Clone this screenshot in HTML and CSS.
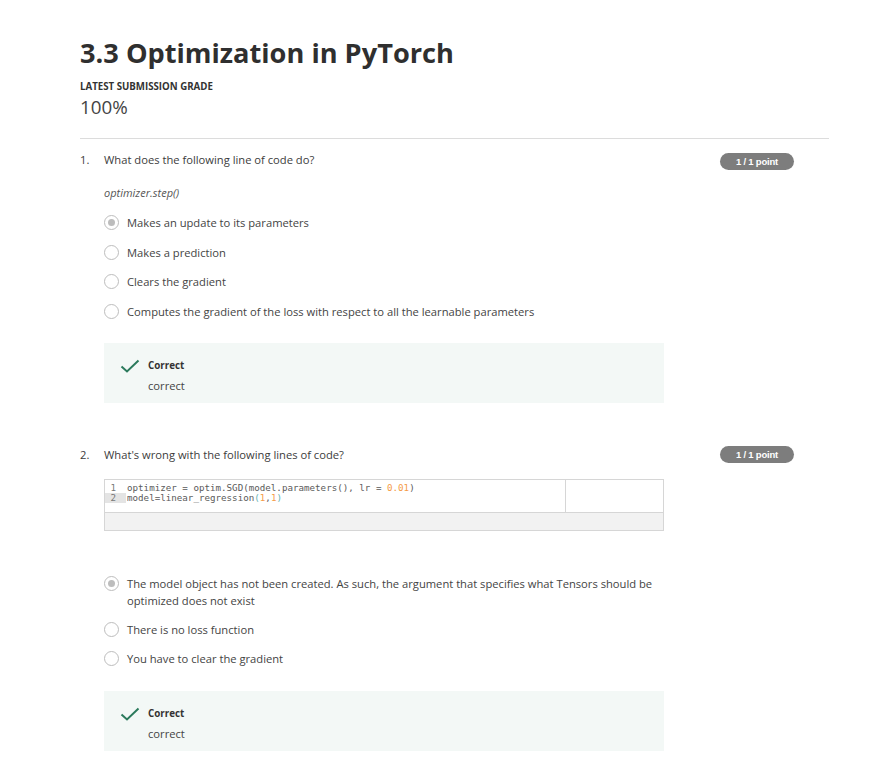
FILE: index.html
```html
<!DOCTYPE html>
<html>
<head>
<meta charset="utf-8">
<link rel="stylesheet" href="styles.css">
</head>
<body>
<div class="page">
  <h1 class="title">3.3 Optimization in PyTorch</h1>
  <div class="grade-label">LATEST SUBMISSION GRADE</div>
  <div class="grade">100%</div>
  <div class="divider"></div>

  <div class="question">
    <div class="qnum">1.</div>
    <div class="qbody">
      <div class="qtext">What does the following line of code do?</div>
      <div class="qcode-italic">optimizer.step()</div>
      <div class="options">
        <div class="option"><span class="radio checked"></span><span class="otext">Makes an update to its parameters</span></div>
        <div class="option"><span class="radio"></span><span class="otext">Makes a prediction</span></div>
        <div class="option"><span class="radio"></span><span class="otext">Clears the gradient</span></div>
        <div class="option"><span class="radio"></span><span class="otext">Computes the gradient of the loss with respect to all the learnable parameters</span></div>
      </div>
      <div class="feedback">
        <svg class="check" viewBox="0 0 20 14" width="20" height="14"><path d="M1.5 7.5 L7 12.5 L18.5 1.5" fill="none" stroke="#2b7a5c" stroke-width="2"/></svg>
        <div class="ftext">
          <div class="fhead">Correct</div>
          <div class="fbody">correct</div>
        </div>
      </div>
    </div>
    <div class="badge">1 / 1 point</div>
  </div>

  <div class="question q2">
    <div class="qnum">2.</div>
    <div class="qbody">
      <div class="qtext">What's wrong with the following lines of code?</div>
      <div class="codebox">
        <div class="editor">
          <div class="lines">
            <div class="line"><span class="gutter">1</span><span class="code">optimizer = optim.SGD(model.parameters(), lr = <span class="num">0.01</span>)</span></div>
            <div class="line active"><span class="gutter">2</span><span class="code">model=linear_regression<span class="paren">(</span><span class="num">1</span>,<span class="num">1</span><span class="paren">)</span></span></div>
          </div>
          <div class="side"></div>
        </div>
        <div class="codefoot"></div>
      </div>
      <div class="options options2">
        <div class="option"><span class="radio checked"></span><span class="otext">The model object has not been created. As such, the argument that specifies what Tensors should be optimized does not exist</span></div>
        <div class="option"><span class="radio"></span><span class="otext">There is no loss function</span></div>
        <div class="option"><span class="radio"></span><span class="otext">You have to clear the gradient</span></div>
      </div>
      <div class="feedback">
        <svg class="check" viewBox="0 0 20 14" width="20" height="14"><path d="M1.5 7.5 L7 12.5 L18.5 1.5" fill="none" stroke="#2b7a5c" stroke-width="2"/></svg>
        <div class="ftext">
          <div class="fhead">Correct</div>
          <div class="fbody">correct</div>
        </div>
      </div>
    </div>
    <div class="badge">1 / 1 point</div>
  </div>
</div>
</body>
</html>
```
FILE: styles.css
```css
html, body {
  margin: 0;
  padding: 0;
  background: #ffffff;
}
body {
  font-family: "Open Sans", "Noto Sans", sans-serif;
  color: #3c3c3c;
}
.page {
  padding: 34px 43px 0 80px;
}
.title {
  margin: 0;
  font-size: 27.2px;
  line-height: 38px;
  font-weight: 700;
  color: #2f2f2f;
  letter-spacing: 0;
}
.grade-label {
  margin-top: 9px;
  font-size: 9.7px;
  font-weight: 700;
  color: #333;
  line-height: 12px;
}
.grade {
  font-size: 18.8px;
  line-height: 26px;
  color: #444;
  margin-top: 1px;
}
.divider {
  height: 1px;
  background: #dcdcdc;
  margin-top: 18px;
}
.question {
  display: flex;
  align-items: flex-start;
  margin-top: 13px;
  font-size: 11.2px;
}
.q2 {
  margin-top: 44px;
}
.qnum {
  width: 24px;
  line-height: 16px;
}
.qbody {
  width: 560px;
}
.qtext {
  line-height: 16px;
}
.qcode-italic {
  font-style: italic;
  font-size: 11px;
  margin-top: 17px;
  line-height: 16px;
  color: #555;
}
.options {
  margin-top: 14px;
  display: flex;
  flex-direction: column;
  gap: 13.5px;
}
.option {
  display: flex;
  align-items: flex-start;
  gap: 8px;
  line-height: 16px;
}
.radio {
  flex: none;
  width: 13px;
  height: 13px;
  border: 1.5px solid #bdbdbd;
  border-radius: 50%;
  box-sizing: content-box;
  position: relative;
  margin-top: 0;
}
.radio.checked::after {
  content: "";
  position: absolute;
  left: 3px;
  top: 3px;
  width: 7px;
  height: 7px;
  border-radius: 50%;
  background: #bdbdbd;
}
.otext {
  color: #444;
}
.feedback {
  margin-top: 23px;
  background: #f3f8f6;
  height: 60px;
  display: flex;
  align-items: flex-start;
  padding: 16px 0 0 16px;
  box-sizing: border-box;
  gap: 8px;
}
.check {
  flex: none;
}
.ftext {
  display: flex;
  flex-direction: column;
  gap: 6px;
}
.fhead {
  font-weight: 700;
  font-size: 9.8px;
  line-height: 14px;
  color: #333;
}
.fbody {
  font-size: 11.2px;
  line-height: 14px;
  color: #444;
}
.badge {
  margin-left: 56px;
  margin-top: 1px;
  width: 74px;
  height: 17px;
  border-radius: 9px;
  background: #7d7d7d;
  color: #fff;
  font-family: "Liberation Sans", Arial, sans-serif;
  font-weight: 700;
  font-size: 9.5px;
  line-height: 17px;
  text-align: center;
  letter-spacing: -0.2px;
}
.q2 .badge {
  margin-top: -1px;
}
.codebox {
  margin-top: 16px;
  border: 1px solid #d6d6d6;
}
.editor {
  display: flex;
  height: 32px;
  border-bottom: 1px solid #d6d6d6;
  background: #fff;
}
.lines {
  width: 460px;
  padding-top: 3px;
  border-right: 1px solid #d6d6d6;
}
.side {
  flex: 1;
}
.line {
  display: flex;
  height: 10px;
  font-family: "DejaVu Sans Mono", "Liberation Mono", monospace;
  font-size: 9.2px;
  line-height: 10px;
  color: #5a5a5a;
}
.gutter {
  width: 11px;
  padding-right: 10px;
  margin-right: 1px;
  text-align: right;
  color: #777;
}
.line.active .gutter {
  background: #e4e4e4;
}
.code {
  white-space: pre;
}
.num {
  color: #f59b47;
}
.paren {
  color: #5fb3b3;
}
.codefoot {
  height: 17px;
  background: #f2f2f2;
}
.options2 {
  margin-top: 45px;
  gap: 13px;
}
.options2 + .feedback {
  margin-top: 24px;
}
.options2 .option:first-child .otext {
  line-height: 17px;
  margin-top: -1px;
}
```
